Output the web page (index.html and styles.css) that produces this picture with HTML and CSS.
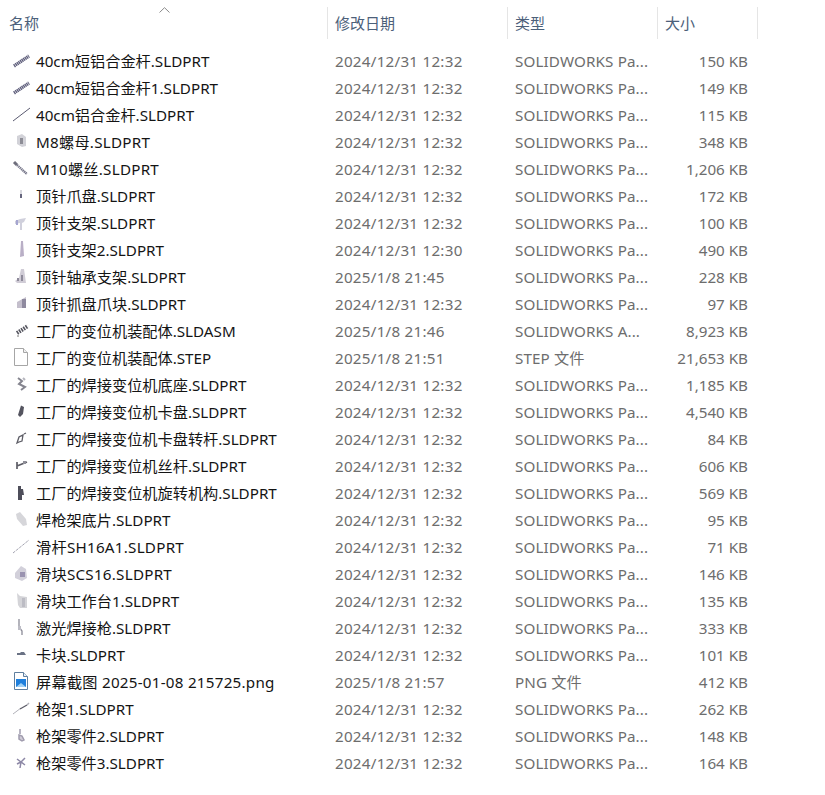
FILE: index.html
```html
<!DOCTYPE html>
<html lang="zh-CN">
<head>
<meta charset="utf-8">
<title>文件列表</title>
<link rel="stylesheet" href="styles.css">
</head>
<body>
<svg class="sort" width="11" height="6" viewBox="0 0 11 6"><path d="M.5 5.500 5.500.7l5 4.800" fill="none" stroke="#8a8a8a"/></svg>
<div class="head">
  <div class="hcell name">名称</div>
  <div class="hcell">修改日期</div>
  <div class="hcell">类型</div>
  <div class="hcell">大小</div>
</div>
<div class="list">
<div class="row"><svg class="ico" viewBox="0 0 18 18"><path d="M2 15 17 5" stroke="#5f5f7c" stroke-width="3.400" stroke-dasharray="1.400 .5" fill="none"/></svg><span class="fn">40cm短铝合金杆.SLDPRT</span><span class="dt">2024/12/31 12:32</span><span class="ty">SOLIDWORKS Pa...</span><span class="sz">150 KB</span></div>
<div class="row"><svg class="ico" viewBox="0 0 18 18"><path d="M2 15 17 5" stroke="#5f5f7c" stroke-width="3.400" stroke-dasharray="1.400 .5" fill="none"/></svg><span class="fn">40cm短铝合金杆1.SLDPRT</span><span class="dt">2024/12/31 12:32</span><span class="ty">SOLIDWORKS Pa...</span><span class="sz">149 KB</span></div>
<div class="row"><svg class="ico" viewBox="0 0 18 18"><path d="M1 16 18 3" stroke="#5a5a70" fill="none"/></svg><span class="fn">40cm铝合金杆.SLDPRT</span><span class="dt">2024/12/31 12:32</span><span class="ty">SOLIDWORKS Pa...</span><span class="sz">115 KB</span></div>
<div class="row"><svg class="ico" viewBox="0 0 18 18"><path d="m5 4 5-2 4 3v9l-4 1-5-3z" fill="#d2d2d8"/><path d="M8 6h3v6H8z" fill="#8d8d96"/></svg><span class="fn wide">M8螺母.SLDPRT</span><span class="dt">2024/12/31 12:32</span><span class="ty">SOLIDWORKS Pa...</span><span class="sz">348 KB</span></div>
<div class="row"><svg class="ico" viewBox="0 0 18 18"><path d="M2 3 5 6" stroke="#6e6e7c" stroke-width="3" fill="none"/><path d="M5 6 15 15" stroke="#77778a" stroke-width="2.400" stroke-dasharray="1.400 .5" fill="none"/></svg><span class="fn wide">M10螺丝.SLDPRT</span><span class="dt">2024/12/31 12:32</span><span class="ty">SOLIDWORKS Pa...</span><span class="sz">1,206 KB</span></div>
<div class="row"><svg class="ico" viewBox="0 0 18 18"><path d="M9 4v4" stroke="#b4b4c0" fill="none"/><path d="M8 8h2v4H8z" fill="#66667e"/></svg><span class="fn">顶针爪盘.SLDPRT</span><span class="dt">2024/12/31 12:32</span><span class="ty">SOLIDWORKS Pa...</span><span class="sz">172 KB</span></div>
<div class="row"><svg class="ico" viewBox="0 0 18 18"><path d="m3 8 5-2 6-1-2 4-2 1v7H8v-7l-5 1z" fill="#d0d0dc"/><path d="M4 7h2v5H4z" fill="#a5a5d0"/></svg><span class="fn">顶针支架.SLDPRT</span><span class="dt">2024/12/31 12:32</span><span class="ty">SOLIDWORKS Pa...</span><span class="sz">100 KB</span></div>
<div class="row"><svg class="ico" viewBox="0 0 18 18"><path d="M9 1h2l1 15-4 1z" fill="#b9afc6"/></svg><span class="fn">顶针支架2.SLDPRT</span><span class="dt">2024/12/31 12:30</span><span class="ty">SOLIDWORKS Pa...</span><span class="sz">490 KB</span></div>
<div class="row"><svg class="ico" viewBox="0 0 18 18"><path d="M9 2h3l2 14H5l-2-2 4-3z" fill="#d0ccd6"/><path d="M9 8h2v6H9zM5 11h2v3H5z" fill="#8e8a9a"/></svg><span class="fn">顶针轴承支架.SLDPRT</span><span class="dt">2025/1/8 21:45</span><span class="ty">SOLIDWORKS Pa...</span><span class="sz">228 KB</span></div>
<div class="row"><svg class="ico" viewBox="0 0 18 18"><path d="M5 8 14 3v11H5z" fill="#c4bfcc"/><path d="M10 5h4v9h-4z" fill="#8f8a9f"/></svg><span class="fn">顶针抓盘爪块.SLDPRT</span><span class="dt">2024/12/31 12:32</span><span class="ty">SOLIDWORKS Pa...</span><span class="sz">97 KB</span></div>
<div class="row"><svg class="ico" viewBox="0 0 18 18"><path d="M5 12 16 5" stroke="#55555f" stroke-width="4" stroke-dasharray="1.600 1" fill="none"/><path d="M6 14v2" stroke="#777" fill="none"/></svg><span class="fn">工厂的变位机装配体.SLDASM</span><span class="dt">2025/1/8 21:46</span><span class="ty">SOLIDWORKS A...</span><span class="sz">8,923 KB</span></div>
<div class="row"><svg class="ico doc" viewBox="0 0 18 18"><path d="M2.500.5h9l4 4v13h-13z" fill="#fff" stroke="#a6a6a6"/><path d="M11.500.5v4h4" fill="#f0f0f0" stroke="#a6a6a6"/></svg><span class="fn">工厂的变位机装配体.STEP</span><span class="dt">2025/1/8 21:51</span><span class="ty">STEP 文件</span><span class="sz">21,653 KB</span></div>
<div class="row"><svg class="ico" viewBox="0 0 18 18"><path d="M6 3l4 3-3 3 6 3-4 3" stroke="#85858f" stroke-width="2" fill="none"/><path d="M11 3l2 2" stroke="#b5b5bd" stroke-width="2" fill="none"/></svg><span class="fn">工厂的焊接变位机底座.SLDPRT</span><span class="dt">2024/12/31 12:32</span><span class="ty">SOLIDWORKS Pa...</span><span class="sz">1,185 KB</span></div>
<div class="row"><svg class="ico" viewBox="0 0 18 18"><path d="M9 3.500 12 5l-1 7-3 3-2-2z" fill="#54545f"/></svg><span class="fn">工厂的焊接变位机卡盘.SLDPRT</span><span class="dt">2024/12/31 12:32</span><span class="ty">SOLIDWORKS Pa...</span><span class="sz">4,540 KB</span></div>
<div class="row"><svg class="ico" viewBox="0 0 18 18"><path d="M5 14 7 8l4-2-1 6-3 1zM12 5l2-1" stroke="#5d5d66" stroke-width="1.300" fill="none"/></svg><span class="fn">工厂的焊接变位机卡盘转杆.SLDPRT</span><span class="dt">2024/12/31 12:32</span><span class="ty">SOLIDWORKS Pa...</span><span class="sz">84 KB</span></div>
<div class="row"><svg class="ico" viewBox="0 0 18 18"><path d="M5 6v7M5 10l10-4" stroke="#5d5d66" stroke-width="1.700" fill="none"/><path d="M11 5h3v3h-3z" fill="#8f8f98"/></svg><span class="fn">工厂的焊接变位机丝杆.SLDPRT</span><span class="dt">2024/12/31 12:32</span><span class="ty">SOLIDWORKS Pa...</span><span class="sz">606 KB</span></div>
<div class="row"><svg class="ico" viewBox="0 0 18 18"><path d="M6 3h3v3h2l1 6h-2v5H6z" fill="#4e4e5a"/></svg><span class="fn">工厂的焊接变位机旋转机构.SLDPRT</span><span class="dt">2024/12/31 12:32</span><span class="ty">SOLIDWORKS Pa...</span><span class="sz">569 KB</span></div>
<div class="row"><svg class="ico" viewBox="0 0 18 18"><path d="m4 4 4-2 6 7 1 6-4 1-6-7z" fill="#d6d6da"/></svg><span class="fn">焊枪架底片.SLDPRT</span><span class="dt">2024/12/31 12:32</span><span class="ty">SOLIDWORKS Pa...</span><span class="sz">95 KB</span></div>
<div class="row"><svg class="ico" viewBox="0 0 18 18"><path d="M1 16 17 3" stroke="#a3a3b0" stroke-dasharray="3 1" fill="none"/></svg><span class="fn wide">滑杆SH16A1.SLDPRT</span><span class="dt">2024/12/31 12:32</span><span class="ty">SOLIDWORKS Pa...</span><span class="sz">71 KB</span></div>
<div class="row"><svg class="ico" viewBox="0 0 18 18"><path d="m3 9 6-7 5 3 1 9-5 3-7-3z" fill="#d2d0da"/><path d="M8 8h5v5H8z" fill="#9a93b0"/></svg><span class="fn wide">滑块SCS16.SLDPRT</span><span class="dt">2024/12/31 12:32</span><span class="ty">SOLIDWORKS Pa...</span><span class="sz">146 KB</span></div>
<div class="row"><svg class="ico" viewBox="0 0 18 18"><path d="m5 2 3 3 7 1v11H8L6 14z" fill="#d4d4d8"/><path d="M10 7h3v9h-3z" fill="#bcbcc4"/></svg><span class="fn">滑块工作台1.SLDPRT</span><span class="dt">2024/12/31 12:32</span><span class="ty">SOLIDWORKS Pa...</span><span class="sz">135 KB</span></div>
<div class="row"><svg class="ico" viewBox="0 0 18 18"><path d="M7 1v8l3 4v4" stroke="#8c8c98" stroke-width="1.300" fill="none"/><path d="M6 8h3v4H6z" fill="#bdbdc6"/></svg><span class="fn">激光焊接枪.SLDPRT</span><span class="dt">2024/12/31 12:32</span><span class="ty">SOLIDWORKS Pa...</span><span class="sz">333 KB</span></div>
<div class="row"><svg class="ico" viewBox="0 0 18 18"><path d="M5 8h3l1-1h3l2 3H5z" fill="#6a7284"/></svg><span class="fn">卡块.SLDPRT</span><span class="dt">2024/12/31 12:32</span><span class="ty">SOLIDWORKS Pa...</span><span class="sz">101 KB</span></div>
<div class="row"><svg class="ico doc" viewBox="0 0 18 18"><path d="M2.500.5h9l4 4v13h-13z" fill="#fff" stroke="#5f7f9f"/><path d="M11.500.5v4h4" fill="#e8f0f8" stroke="#5f7f9f"/><path d="M4 7h10v8H4z" fill="#1f7fdc"/><path d="m4 15 5-4 5 4z" fill="#9fd0f5"/></svg><span class="fn wide">屏幕截图 2025-01-08 215725.png</span><span class="dt">2025/1/8 21:57</span><span class="ty">PNG 文件</span><span class="sz">412 KB</span></div>
<div class="row"><svg class="ico" viewBox="0 0 18 18"><path d="M1 15 9 9" stroke="#b0b0b8" fill="none"/><path d="M8 10 15 6" stroke="#5c5c68" stroke-width="1.300" fill="none"/><path d="M15 6l2-2" stroke="#b0b0b8" stroke-width="1.500" fill="none"/></svg><span class="fn">枪架1.SLDPRT</span><span class="dt">2024/12/31 12:32</span><span class="ty">SOLIDWORKS Pa...</span><span class="sz">262 KB</span></div>
<div class="row"><svg class="ico" viewBox="0 0 18 18"><path d="M8 3v5M7 9l3 1 2 4-2 1-3-2z" stroke="#a09cae" stroke-width="1.500" fill="#cfcbd6"/></svg><span class="fn">枪架零件2.SLDPRT</span><span class="dt">2024/12/31 12:32</span><span class="ty">SOLIDWORKS Pa...</span><span class="sz">148 KB</span></div>
<div class="row"><svg class="ico" viewBox="0 0 18 18"><path d="m5 6 4 3 4-4M9 9l-1 6M5 11l4-2 4 3" stroke="#8d88a6" stroke-width="1.500" fill="none"/></svg><span class="fn">枪架零件3.SLDPRT</span><span class="dt">2024/12/31 12:32</span><span class="ty">SOLIDWORKS Pa...</span><span class="sz">164 KB</span></div>
</div>
</body>
</html>
```
FILE: styles.css
```css
html, body {
  margin: 0;
  padding: 0;
  background: #fff;
}
body {
  position: relative;
  width: 825px;
  height: 795px;
  overflow: hidden;
  font-family: "Noto Sans", "Noto Sans CJK SC", sans-serif;
  font-size: 15.2px;
}
.sort {
  position: absolute;
  left: 159px;
  top: 7px;
}
.head {
  display: grid;
  grid-template-columns: 328px 180px 150px 100px;
  margin-top: 7px;
  height: 32px;
  color: #4c607a;
}
.hcell {
  box-sizing: border-box;
  padding-left: 7px;
  border-right: 1px solid #e5e5e5;
  line-height: 32px;
  font-size: 15px;
}
.hcell.name {
  padding-left: 9px;
}
.list {
  margin-top: 9px;
}
.row {
  display: grid;
  grid-template-columns: 18px 305px 180px 150px 83px;
  padding-left: 12px;
  height: 27px;
  line-height: 27px;
  align-items: start;
  white-space: nowrap;
}
.ico {
  width: 18px;
  height: 18px;
  margin-top: 3px;
  filter: blur(.35px);
}
.ico.doc {
  filter: none;
}
.fn {
  padding-left: 6px;
  color: #141414;
}
.fn.wide {
  letter-spacing: .25px;
}
.dt, .ty, .sz {
  color: #6d6d6d;
}
.dt {
  letter-spacing: .25px;
}
.ty {
  letter-spacing: .13px;
}
.sz {
  text-align: right;
}
```
